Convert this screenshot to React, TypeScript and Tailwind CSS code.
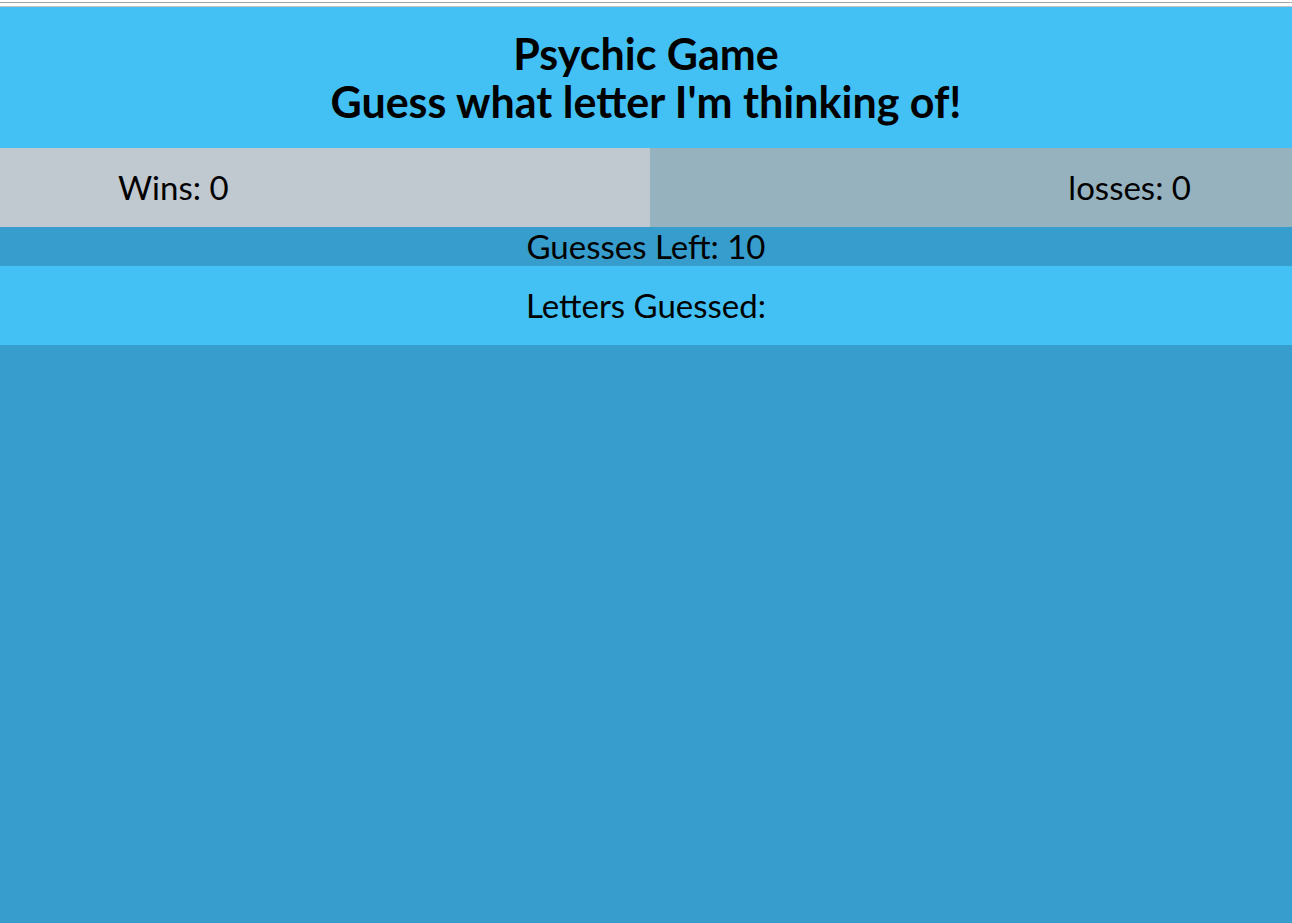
export default function App() {
    return (
        <div className="min-h-[923px] bg-[#379dcd] font-['Lato',sans-serif] text-black">
            <div className="h-[7px] bg-white pt-[2px]">
                <div className="h-[5px] border-t border-b border-t-[#a8a8a8] border-b-[#c4c4c4]" />
            </div>
            <header className="bg-[#43c0f4] h-[141px] flex flex-col items-center justify-center font-bold text-[43px] leading-[48px]">
                <h1>Psychic Game</h1>
                <h1>Guess what letter I'm thinking of!</h1>
            </header>
            <div className="flex h-[79px] text-[33px]">
                <div className="w-[650px] bg-[#c0c8d0] flex items-center pl-[118px]">Wins: 0</div>
                <div className="flex-1 bg-[#96b2bf] flex items-center justify-end pr-[101px]">losses: 0</div>
            </div>
            <div className="h-[39px] flex items-center justify-center text-[33px]">Guesses Left: 10</div>
            <div className="h-[79px] bg-[#43c0f4] flex items-center justify-center text-[33px]">Letters Guessed:</div>
        </div>
    );
}
